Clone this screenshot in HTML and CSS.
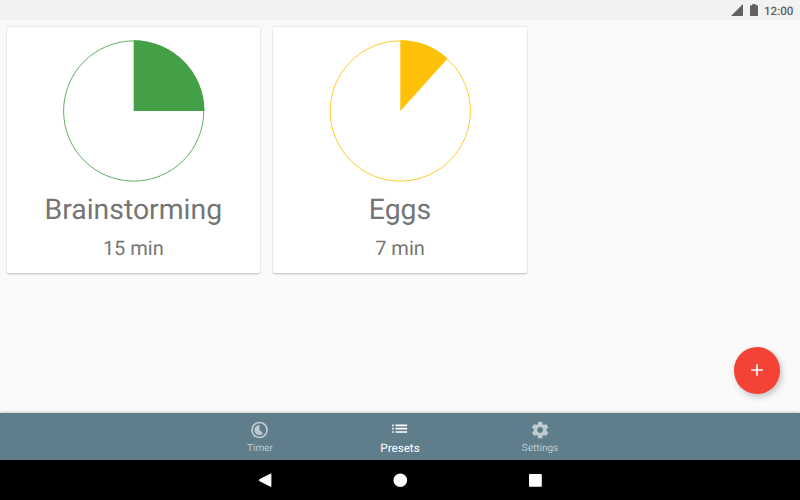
FILE: index.html
```html
<!DOCTYPE html>
<html lang="en">
<head>
<meta charset="utf-8">
<title>Presets</title>
<link rel="stylesheet" href="styles.css">
</head>
<body>
<div class="screen">
  <header class="status">
    <svg class="signal" viewBox="0 0 12 12"><path d="M12 0v12H0z"/></svg>
    <svg class="battery" viewBox="0 0 8 12"><path d="M2.3 0h3.4v1.2H7.2a.8.8 0 0 1 .8.8v9.2a.8.8 0 0 1-.8.8H.8a.8.8 0 0 1-.8-.8V2a.8.8 0 0 1 .8-.8h1.5z"/></svg>
    <span class="clock">12:00</span>
  </header>
  <main class="presets">
    <article class="card">
      <svg class="dial green" viewBox="0 0 142 142"><circle cx="71.7" cy="71" r="70.1"/><path d="M71.7 71V.3A70.7 70.7 0 0 1 142.4 71z"/></svg>
      <h2 class="name">Brainstorming</h2>
      <p class="length">15 min</p>
    </article>
    <article class="card">
      <svg class="dial amber" viewBox="0 0 142 142"><circle cx="71.3" cy="71" r="70.1"/><path d="M71.3 71V.3A70.7 70.7 0 0 1 118.6 18.46z"/></svg>
      <h2 class="name">Eggs</h2>
      <p class="length">7 min</p>
    </article>
    <button class="fab" aria-label="Add"><svg viewBox="0 0 24 24"><path d="M19 13h-6v6h-2v-6H5v-2h6V5h2v6h6v2z"/></svg></button>
  </main>
  <nav class="tabs">
    <a class="tab"><svg viewBox="0.6 0 24 24"><path fill-rule="evenodd" d="M12 2a10 10 0 1 0 0 20a10 10 0 1 0 0-20zM12 4a8 8 0 1 1 0 16a8 8 0 1 1 0-16z"/><path d="M12 6v6l4.24 4.24A6 6 0 1 1 12 6z"/></svg><span>Timer</span></a>
    <a class="tab active"><svg viewBox="0.4 0.4 24 24"><path d="M3 13h2v-2H3v2zm0 4h2v-2H3v2zm0-8h2V7H3v2zm4 4h14v-2H7v2zm0 4h14v-2H7v2zM7 7v2h14V7H7z"/></svg><span>Presets</span></a>
    <a class="tab"><svg viewBox="-0.2 0 24 24"><path d="M19.43 12.98c.04-.32.07-.64.07-.98s-.03-.66-.07-.98l2.11-1.65c.19-.15.24-.42.12-.64l-2-3.46c-.12-.22-.39-.3-.61-.22l-2.49 1c-.52-.4-1.08-.73-1.69-.98l-.38-2.65C14.46 2.18 14.25 2 14 2h-4c-.25 0-.46.18-.49.42l-.38 2.65c-.61.25-1.17.59-1.69.98l-2.49-1c-.23-.09-.49 0-.61.22l-2 3.46c-.13.22-.07.49.12.64l2.11 1.65c-.04.32-.07.65-.07.98s.03.66.07.98l-2.11 1.65c-.19.15-.24.42-.12.64l2 3.46c.12.22.39.3.61.22l2.49-1c.52.4 1.08.73 1.69.98l.38 2.65c.03.24.24.42.49.42h4c.25 0 .46-.18.49-.42l.38-2.65c.61-.25 1.17-.59 1.69-.98l2.49 1c.23.09.49 0 .61-.22l2-3.46c.12-.22.07-.49-.12-.64l-2.11-1.65zM12 15.5c-1.93 0-3.5-1.57-3.5-3.5s1.57-3.5 3.5-3.5 3.5 1.57 3.5 3.5-1.57 3.5-3.5 3.5z"/></svg><span>Settings</span></a>
  </nav>
  <footer class="system">
    <svg viewBox="0 0 14 14"><path d="M12.9.9v12.6L1.6 7.7Q.6 7.2 1.6 6.6z" stroke="#fff" stroke-linejoin="round"/></svg>
    <svg viewBox="0 0 14 14"><circle cx="7.3" cy="7.3" r="6.8"/></svg>
    <svg viewBox="0 0 14 14"><rect x="1" y="1" width="12.8" height="12.8" rx=".7"/></svg>
  </footer>
</div>
</body>
</html>
```
FILE: styles.css
```css
* { box-sizing: border-box; }
body { margin: 0; font-family: Roboto, sans-serif; background: #fafafa; text-rendering: geometricPrecision; }
svg { display: block; overflow: visible; }
.screen { width: 800px; height: 500px; display: flex; flex-direction: column; overflow: hidden; }
.status {
  height: 20px; flex: none; background: #f2f2f2; color: #5f5f5f;
  display: flex; align-items: center; justify-content: flex-end; padding: 0 6.5px 0 0;
}
.status svg { fill: #616161; }
.signal { width: 12px; height: 12px; margin-right: 6.5px; }
.battery { width: 8px; height: 12px; margin-right: 6px; }
.clock { font-size: 11.67px; font-weight: 500; line-height: 14px; margin-top: 1px; }
.presets {
  position: relative; flex: 1; min-height: 0; display: flex; align-items: flex-start;
  gap: 13.33px; padding: 6.67px;
}
.card {
  width: 253.33px; height: 246.67px; padding-top: 13.33px; border-radius: 1.67px;
  background: #fff; box-shadow: 0 .5px 2px rgba(0, 0, 0, .25);
  color: #757575; display: flex; flex-direction: column; align-items: center;
}
.dial { width: 142px; height: 142px; flex: none; }
.dial circle { fill: none; stroke-width: .85; }
.green { fill: #43a047; }
.green circle { stroke: #43a047; }
.amber { fill: #ffc107; }
.amber circle { stroke: #ffc107; }
.name { margin: 11px 0 0; font-size: 28.4px; line-height: 34px; font-weight: 400; }
.length { margin: 8.6px 0 0; font-size: 20px; line-height: 24px; }
.fab {
  position: absolute; right: 19.7px; bottom: 19.7px; width: 46.67px; height: 46.67px;
  border: 0; border-radius: 50%; padding: 0; background: #f44336;
  display: flex; align-items: center; justify-content: center;
  box-shadow: 2px 3px 6px rgba(0, 0, 0, .22);
}
.fab svg { width: 20px; height: 20px; fill: #fff; }
.tabs {
  position: relative; height: 46.67px; flex: none; background: #607d8b;
  display: flex; justify-content: center; box-shadow: 0 0 3px rgba(0, 0, 0, .35);
}
.tab {
  width: 140px; padding-top: 6.67px; display: flex; flex-direction: column; align-items: center;
  color: #bfcbd1; font-size: 10px; line-height: 12px;
}
.tab svg { width: 20px; height: 20px; fill: currentColor; }
.tab span { margin-top: 3.3px; }
.tab.active { padding-top: 5.4px; color: #fff; font-size: 11.67px; }
.tab.active span { margin-top: 3px; }
.system {
  position: relative; height: 40px; flex: none; background: #000;
  display: flex; align-items: center; justify-content: center; gap: 121px;
}
.system svg { width: 14px; height: 14px; fill: #fff; }
```
